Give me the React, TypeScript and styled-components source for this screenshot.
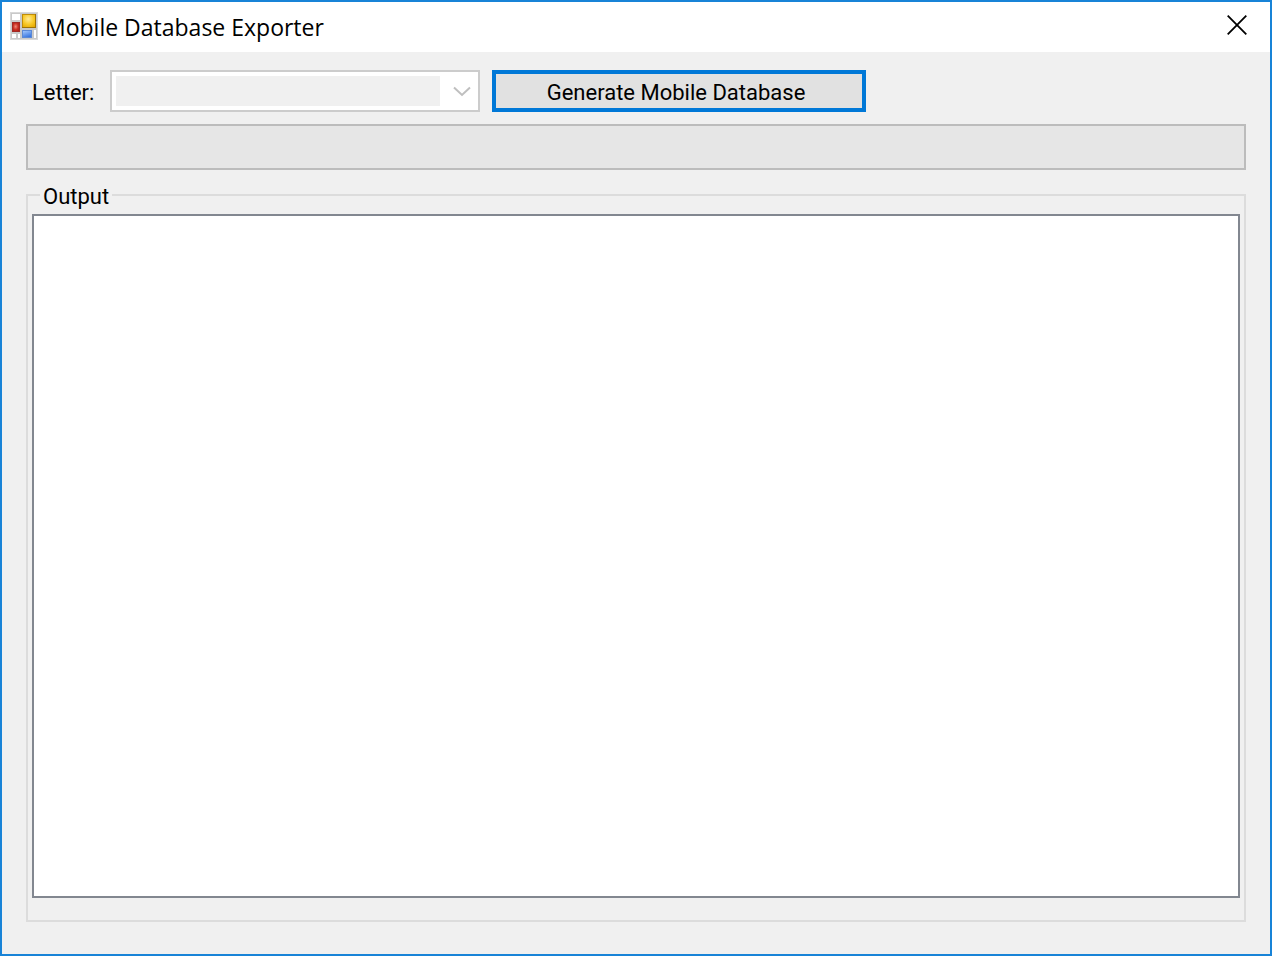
import React from "react";
import styled, { createGlobalStyle } from "styled-components";

const GlobalStyle = createGlobalStyle`
  *, *::before, *::after { box-sizing: border-box; }
  body { margin: 0; background: #f0f0f0; }
`;

const Window = styled.div`
  display: flex;
  flex-direction: column;
  min-height: 100vh;
  border: 2px solid #1883d7;
  background: #f0f0f0;
  color: #000;
  font: 22px/28px Roboto, "Liberation Sans", sans-serif;
`;

const TitleBar = styled.header`
  display: flex;
  align-items: center;
  height: 50px;
  padding: 0 0 2px 8px;
  background: #fff;
`;

const Title = styled.h1`
  flex: 1;
  margin: 0 0 0 7px;
  padding-top: 2px;
  font: 400 23px/32px "Open Sans", "Noto Sans", sans-serif;
`;

const CloseButton = styled.button`
  display: flex;
  align-items: center;
  justify-content: center;
  width: 66px;
  height: 46px;
  margin-bottom: 2px;
  padding: 0;
  border: 0;
  background: transparent;
`;

const Content = styled.main`
  display: flex;
  flex: 1;
  flex-direction: column;
  padding: 18px 24px 32px;
`;

const Toolbar = styled.div`
  display: flex;
  align-items: center;
  gap: 12px;
  padding-left: 6px;
`;

const FieldLabel = styled.label`
  width: 66px;
  padding-top: 4px;
`;

const SelectBox = styled.div`
  position: relative;
  width: 370px;
  height: 42px;
`;

const Select = styled.select`
  appearance: none;
  display: block;
  width: 100%;
  height: 100%;
  padding: 4px 38px 4px 4px;
  border: 2px solid #ccc;
  border-radius: 0;
  background: linear-gradient(#f0f0f0, #f0f0f0) content-box, #fff;
  font: inherit;
  opacity: 1;
`;

const Chevron = styled.svg`
  position: absolute;
  top: 16px;
  right: 9px;
  pointer-events: none;
`;

const ActionButton = styled.button`
  width: 374px;
  height: 42px;
  padding: 4px 6px 0 0;
  border: 4px solid #0078d7;
  background: #e1e1e1;
  color: inherit;
  font: inherit;
`;

const Progress = styled.progress`
  appearance: none;
  display: block;
  width: 100%;
  height: 46px;
  margin-top: 12px;
  border: 2px solid #bcbcbc;
  background: #e6e6e6;

  &::-webkit-progress-bar { background: #e6e6e6; }
  &::-webkit-progress-value { background: #06b025; }
`;

const Group = styled.fieldset`
  flex: 1;
  min-width: 0;
  margin: 9px 0 0;
  padding: 3px 4px 22px;
  border: 2px solid #dcdcdc;
`;

const Legend = styled.legend`
  margin-left: 8px;
  padding: 4px 3px 0;
`;

const Output = styled.textarea`
  display: block;
  width: 100%;
  height: calc(100vh - 272px);
  min-height: 200px;
  padding: 4px;
  border: 2px solid #828790;
  border-radius: 0;
  background: #fff;
  font: inherit;
  resize: none;
`;

const AppIcon = () => (
  <svg width="28" height="28" viewBox="0 0 28 28" aria-hidden="true">
    <defs>
      <radialGradient id="gold" cx="45%" cy="35%" r="75%">
        <stop offset="0" stopColor="#ffea98" />
        <stop offset="0.55" stopColor="#f8c928" />
        <stop offset="1" stopColor="#e5a800" />
      </radialGradient>
      <radialGradient id="red" cx="45%" cy="45%" r="70%">
        <stop offset="0" stopColor="#ef8a78" />
        <stop offset="0.5" stopColor="#ca3023" />
        <stop offset="1" stopColor="#a51a12" />
      </radialGradient>
      <linearGradient id="blue" x1="0" y1="0" x2="0.4" y2="1">
        <stop offset="0" stopColor="#a8ccff" />
        <stop offset="1" stopColor="#3c78e0" />
      </linearGradient>
    </defs>
    <rect width="28" height="28" fill="#c9c9c9" />
    <rect x="0.5" y="0.5" width="27" height="27" fill="none" stroke="#d9d9d9" />
    <rect x="2" y="2" width="8" height="6" fill="#fff" />
    <rect x="2" y="22" width="4" height="4" fill="#fff" />
    <rect x="8" y="22" width="2" height="4" fill="#fff" />
    <rect x="24" y="18" width="2" height="8" fill="#fff" />
    <rect x="12.5" y="2.5" width="13" height="13" fill="url(#gold)" stroke="#c08d08" />
    <path d="M12 15.5h14M25.5 2v14" stroke="#9d7206" />
    <rect x="2.5" y="10.5" width="7" height="9" fill="url(#red)" stroke="#a02a25" />
    <rect x="12.5" y="18.5" width="9" height="7" fill="url(#blue)" stroke="#5b89d5" />
  </svg>
);

export default function App() {
  return (
    <>
      <GlobalStyle />
      <Window>
        <TitleBar>
          <AppIcon />
          <Title>Mobile Database Exporter</Title>
          <CloseButton type="button" aria-label="Close">
            <svg width="20" height="20" viewBox="0 0 20 20" aria-hidden="true">
              <path d="M0.7 0.7 19.3 19.3M19.3 0.7 0.7 19.3" stroke="#000" strokeWidth="1.8" />
            </svg>
          </CloseButton>
        </TitleBar>
        <Content>
          <Toolbar>
            <FieldLabel htmlFor="letter">Letter:</FieldLabel>
            <SelectBox>
              <Select id="letter" disabled />
              <Chevron width="18" height="12" viewBox="0 0 18 12" aria-hidden="true">
                <path d="M1 1.5 9 9 17 1.5" fill="none" stroke="#bfbfbf" strokeWidth="2" />
              </Chevron>
            </SelectBox>
            <ActionButton type="button">Generate Mobile Database</ActionButton>
          </Toolbar>
          <Progress value={0} max={100} aria-label="Export progress" />
          <Group>
            <Legend>Output</Legend>
            <Output aria-label="Output" readOnly />
          </Group>
        </Content>
      </Window>
    </>
  );
}
